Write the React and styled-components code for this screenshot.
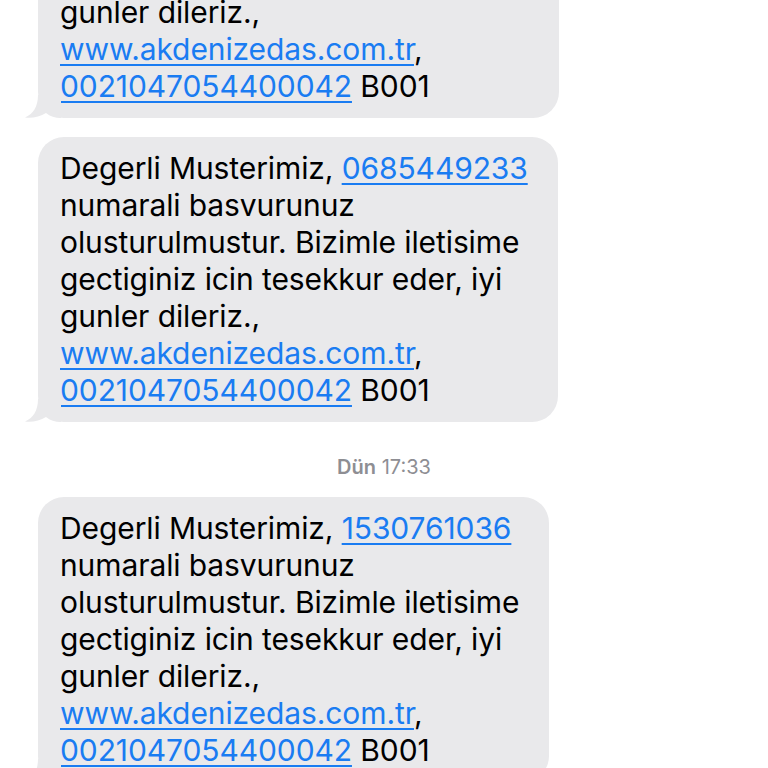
import React from "react";
import styled, { createGlobalStyle } from "styled-components";

const GlobalStyle = createGlobalStyle`
  html, body {
    margin: 0;
    padding: 0;
    background: #ffffff;
    overflow: hidden;
  }
  body {
    font-family: Inter, "Noto Sans", "Liberation Sans", sans-serif;
    -webkit-font-smoothing: antialiased;
  }
`;

const messages = [
  { id: 1, number: "0685449234" },
  { id: 2, number: "0685449233" },
  { id: 3, number: "1530761036", stamp: true },
];

const App = () => {
  return (
    <>
      <GlobalStyle />
      <Thread>
        {messages.map((m) => (
          <React.Fragment key={m.id}>
            {m.stamp && (
              <Stamp>
                <b>Dün</b> 17:33
              </Stamp>
            )}
            <Row>
              <Bubble>
                Degerli Musterimiz, <Link>{m.number}</Link>
                <br />
                numarali basvurunuz
                <br />
                olusturulmustur. Bizimle iletisime
                <br />
                gectiginiz icin tesekkur eder, iyi
                <br />
                gunler dileriz.,
                <br />
                <Link>www.akdenizedas.com.tr</Link>,
                <br />
                <Link>0021047054400042</Link> B001
                <Tail viewBox="0 0 36 23" width="36" height="23">
                  <path
                    d="M13 0 C13 12 8 19 0 22.5 C7 23.3 15 22 21 18 C25 21.5 30 23 36 23 L36 0 Z"
                    fill="#e9e9eb"
                  />
                </Tail>
              </Bubble>
            </Row>
          </React.Fragment>
        ))}
      </Thread>
    </>
  );
};

const Thread = styled.div`
  display: flex;
  flex-direction: column;
  width: 768px;
  margin-top: -167px;
`;

const Row = styled.div`
  display: flex;
  padding-left: 38px;
  margin-bottom: 19px;
`;

const Bubble = styled.div`
  position: relative;
  background: #e9e9eb;
  border-radius: 26px;
  padding: 13px 30px 13px 22px;
  font-size: 30px;
  line-height: 37px;
  color: #000000;
  letter-spacing: -0.1px;
  white-space: nowrap;
`;

const Link = styled.span`
  color: #1a7cf2;
  text-decoration: underline;
  text-decoration-thickness: 1.5px;
  text-underline-offset: 4px;
`;

const Tail = styled.svg`
  position: absolute;
  left: -13px;
  bottom: 0;
  display: block;
`;

const Stamp = styled.div`
  text-align: center;
  color: #8e8e93;
  font-size: 20px;
  line-height: 24px;
  margin: 14px 0 18px;

  b {
    font-weight: 600;
  }
`;

export default App;
